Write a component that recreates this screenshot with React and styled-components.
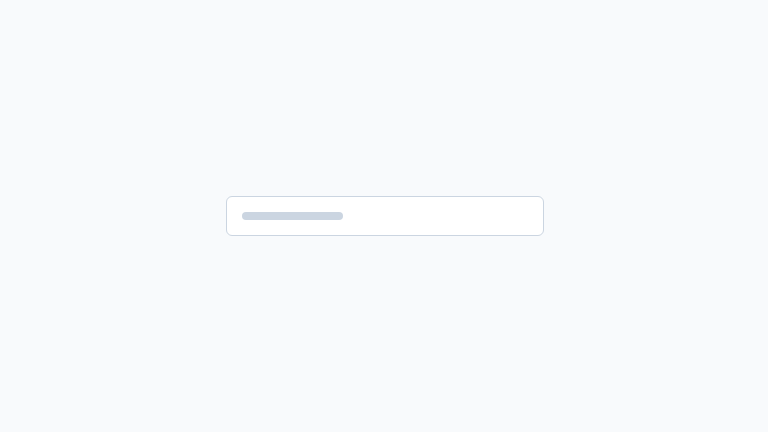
import React from "react";
import styled, { createGlobalStyle } from "styled-components";

const Global = createGlobalStyle`
  html, body { margin: 0; padding: 0; background: #f8fafc; font-family: Inter, "Noto Sans", sans-serif; }
  #root { min-height: 100vh; }
`;

const Page = styled.main`
  min-height: 100vh;
  display: flex;
  align-items: center;
  justify-content: center;
  background: #f8fafc;
`;

const Field = styled.div`
  box-sizing: border-box;
  width: 318px;
  height: 40px;
  background: #ffffff;
  border: 1px solid #cbd5e1;
  border-radius: 6px;
  display: flex;
  align-items: center;
  padding: 0 15px;
  margin-left: 1px;
`;

const Skeleton = styled.span`
  display: block;
  width: ${(p) => p.$w}px;
  height: 8px;
  border-radius: 4px;
  background: #cbd5e1;
`;

export default function App() {
  return (
    <>
      <Global />
      <Page>
        <Field>
          <Skeleton $w={101} />
        </Field>
      </Page>
    </>
  );
}
